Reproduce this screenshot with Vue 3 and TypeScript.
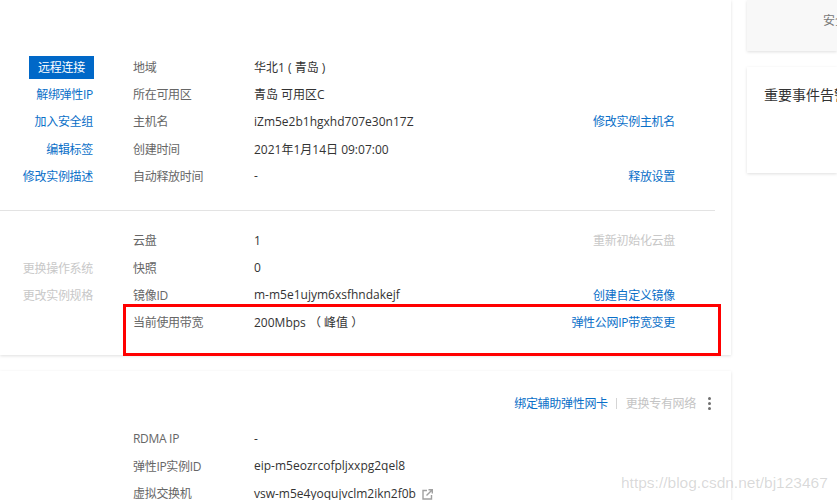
<script setup lang="ts">
interface Row {
  action?: string
  actionKind?: 'primary' | 'link' | 'muted'
  label: string
  value: string
  side?: string
  sideMuted?: boolean
  external?: boolean
}

const basic: Row[] = [
  { action: '远程连接', actionKind: 'primary', label: '地域', value: '华北1 ( 青岛 )' },
  { action: '解绑弹性IP', actionKind: 'link', label: '所在可用区', value: '青岛 可用区C' },
  { action: '加入安全组', actionKind: 'link', label: '主机名', value: 'iZm5e2b1hgxhd707e30n17Z', side: '修改实例主机名' },
  { action: '编辑标签', actionKind: 'link', label: '创建时间', value: '2021年1月14日 09:07:00' },
  { action: '修改实例描述', actionKind: 'link', label: '自动释放时间', value: '-', side: '释放设置' },
]
const config: Row[] = [
  { label: '云盘', value: '1', side: '重新初始化云盘', sideMuted: true },
  { action: '更换操作系统', actionKind: 'muted', label: '快照', value: '0' },
  { action: '更改实例规格', actionKind: 'muted', label: '镜像ID', value: 'm-m5e1ujym6xsfhndakejf', side: '创建自定义镜像' },
  { label: '当前使用带宽', value: '200Mbps （ 峰值 ）', side: '弹性公网IP带宽变更' },
]
const network: Row[] = [
  { label: 'RDMA IP', value: '-' },
  { label: '弹性IP实例ID', value: 'eip-m5eozrcofpljxxpg2qel8' },
  { label: '虚拟交换机', value: 'vsw-m5e4yoqujvclm2ikn2f0b', external: true },
]
</script>

<template>
  <div class="page">
    <main class="main">
      <section class="card card-top">
        <div class="rows rows-basic">
          <div v-for="r in basic" :key="r.label" class="row">
            <div class="action" :class="r.actionKind">
              <span>{{ r.action }}</span>
            </div>
            <div class="label">{{ r.label }}</div>
            <div class="value">{{ r.value }}</div>
            <div class="side" :class="{ muted: r.sideMuted }">{{ r.side }}</div>
          </div>
        </div>
        <div class="divider"></div>
        <div class="rows rows-config">
          <div v-for="r in config" :key="r.label" class="row">
            <div class="action" :class="r.actionKind">
              <span>{{ r.action }}</span>
            </div>
            <div class="label">{{ r.label }}</div>
            <div class="value">{{ r.value }}</div>
            <div class="side" :class="{ muted: r.sideMuted }">{{ r.side }}</div>
          </div>
        </div>
      </section>

      <section class="card card-network">
        <div class="net-head">
          <span class="link">绑定辅助弹性网卡</span>
          <span class="sep"></span>
          <span class="disabled">更换专有网络</span>
          <span class="kebab"><i></i><i></i><i></i></span>
        </div>
        <div class="rows">
          <div v-for="r in network" :key="r.label" class="row">
            <div class="action"></div>
            <div class="label">{{ r.label }}</div>
            <div class="value">
              {{ r.value }}
              <svg v-if="r.external" class="ext" width="11" height="11" viewBox="0 0 11 11" fill="none">
                <path d="M5 1.500H1v8.500h8.500V6" stroke="#a0a0a0" stroke-width="1.400" />
                <path d="M4.500 6.500L9.800 1.200M6.500 .7h3.800v3.800" stroke="#a0a0a0" stroke-width="1.400" />
              </svg>
            </div>
            <div class="side"></div>
          </div>
        </div>
      </section>
    </main>

    <aside class="aside">
      <div class="aside-card aside-grey"><span class="aside-text">安全</span></div>
      <div class="aside-card aside-white"><h3>重要事件告警</h3></div>
    </aside>

    <div class="highlight"></div>
    <div class="watermark">https://blog.csdn.net/bj123467</div>
  </div>
</template>

<style>
html,
body {
  margin: 0;
  background: #fff;
}
</style>

<style scoped>
.page {
  position: relative;
  display: flex;
  gap: 16px;
  width: 837px;
  height: 500px;
  overflow: hidden;
  background: #fff;
  font-family: "Open Sans", "Noto Sans CJK SC", sans-serif;
  font-size: 12px;
  color: #333;
}
.main {
  flex: 0 0 731px;
  display: flex;
  flex-direction: column;
  gap: 16px;
}
.card {
  background: #fff;
  box-shadow: 0 1px 3px rgba(0, 0, 0, 0.13);
}
.card-top {
  flex: 0 0 355px;
  padding-top: 53px;
  box-sizing: border-box;
}
.rows-basic {
  padding-bottom: 20px;
}
.divider {
  width: 715px;
  height: 1px;
  background: #e3e3e3;
}
.rows-config {
  padding-top: 16px;
}
.card-network {
  flex: 0 0 200px;
}
.net-head {
  display: flex;
  align-items: center;
  height: 20px;
  padding: 22px 0 12px;
  margin-right: 17px;
  justify-content: flex-end;
  letter-spacing: -0.3px;
}
.link {
  color: #0a6fc8;
}
.disabled {
  color: #c4c4c4;
}
.sep {
  width: 1px;
  height: 11px;
  margin: 0 9px 0 8px;
  background: #d5d5d5;
}
.kebab {
  display: flex;
  flex-direction: column;
  gap: 2px;
  margin-left: 12px;
  width: 3px;
  margin-right: 3px;
}
.kebab i {
  width: 3px;
  height: 3px;
  border-radius: 50%;
  background: #6f6f6f;
}
.row {
  display: grid;
  grid-template-columns: 93px 161px 1fr auto;
  height: 27.33px;
  align-items: center;
  padding-right: 56px;
}
.action {
  text-align: right;
  white-space: nowrap;
  letter-spacing: -0.3px;
}
.action.link {
  color: #0a6fc8;
}
.label {
  padding-left: 40px;
  color: #666;
  white-space: nowrap;
  letter-spacing: -0.3px;
}
.value {
  color: #333;
  white-space: nowrap;
}
.side {
  color: #0a6fc8;
  white-space: nowrap;
  letter-spacing: -0.3px;
}
.side.muted,
.action.muted {
  color: #c8c8c8;
}
.action.primary span {
  display: inline-block;
  width: 65px;
  height: 23px;
  margin-right: -1px;
  margin-top: 2px;
  line-height: 23px;
  text-align: center;
  color: #fff;
  background: #0068c8;
}
.ext {
  margin-left: 3px;
  vertical-align: -2px;
}
.aside {
  flex: 1;
  display: flex;
  flex-direction: column;
  gap: 16px;
  min-width: 0;
}
.aside-card {
  box-shadow: 0 1px 3px rgba(0, 0, 0, 0.13);
  white-space: nowrap;
  overflow: hidden;
}
.aside-grey {
  height: 51px;
  background: #f8f8f8;
  padding: 11px 0 0 76px;
  box-sizing: border-box;
  color: #777;
}
.aside-white {
  height: 106px;
  background: #fff;
  padding: 18px 0 0 17px;
  box-sizing: border-box;
}
.aside-white h3 {
  margin: 0;
  font-size: 14px;
  font-weight: 400;
  line-height: 20px;
  color: #333;
}
.highlight {
  position: absolute;
  left: 123px;
  top: 304px;
  width: 598px;
  height: 52px;
  box-sizing: border-box;
  border: 3px solid #f00;
}
.watermark {
  position: absolute;
  left: 621px;
  top: 473px;
  font-family: "Liberation Sans", sans-serif;
  font-size: 15.5px;
  line-height: 20px;
  color: rgba(120, 120, 120, 0.28);
  white-space: nowrap;
}
</style>
